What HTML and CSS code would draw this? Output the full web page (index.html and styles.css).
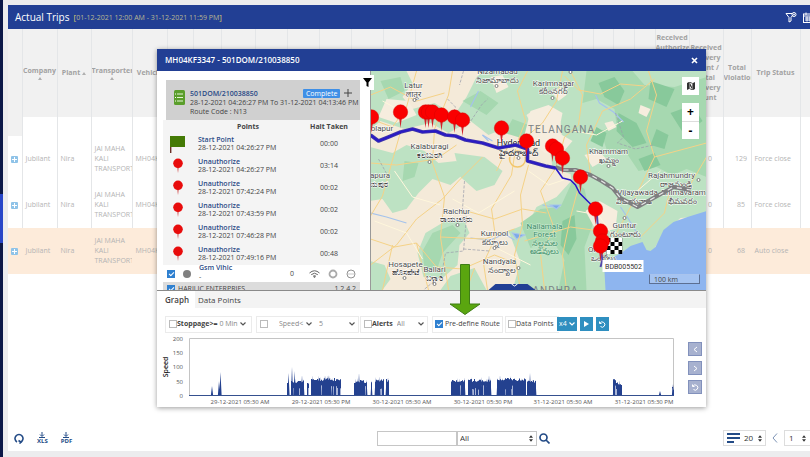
FILE: index.html
```html
<!DOCTYPE html>
<html lang="en">
<head>
<meta charset="utf-8">
<title>Actual Trips</title>
<link rel="stylesheet" href="styles.css">
</head>
<body>
<nav class="rail" aria-label="Main"><span class="rail-active"></span></nav>
<main class="page">
  <header class="page-head">
    <h1>Actual Trips</h1>
    <span class="range">[<b>01-12-2021 12:00 AM - 31-12-2021 11:59 PM</b>]</span>
    <div class="head-tools">
      <button class="bare" aria-label="Filter"><svg width="12" height="12" viewBox="0 0 12 12" fill="none" stroke="#fff"><path d="M1 2.5h6M1 2.5l3 4V11l2-1V6.500l1.500-2"/><circle cx="9" cy="3.500" r="2"/><path d="M9 2.500v2M8 3.500h2" stroke-width=".7"/></svg></button>
      <button class="bare" aria-label="Calendar"><svg width="11" height="11" viewBox="0 0 11 11" fill="none" stroke="#fff"><rect x=".5" y="2" width="10" height="8.500"/><path d="M.5 4h10M3 .5V3M8 .5V3M2 6h7M2 8h7M4 4.500v5M7 4.500v5"/></svg></button>
    </div>
  </header>
  <div class="table-wrap">
    <table class="trips">
      <colgroup><col class="w14"><col class="w35"><col class="w34"><col class="w41"><col class="w35"><col class="w26"><col class="w28"><col class="w34"><col span="9" class="w32"><col class="w29"><col class="w21"><col class="w20"><col class="w21"><col class="w21"><col class="w34"><col class="w34"><col class="w28"><col class="w49"><col class="w40"></colgroup>
      <thead><tr><th></th><th>Company<i class="sort"></i></th><th>Plant<i class="sort in"></i></th><th>Transporter<i class="sort"></i></th><th>Vehicle</th><th></th><th></th><th></th><th></th><th></th><th></th><th></th><th></th><th></th><th></th><th></th><th></th><th></th><th></th><th></th><th></th><th></th><th>Received Authorized Delivery Count<br>/<br>Total Delivery Count</th><th>Received Delivery Count / Total Delivery Count</th><th>Total Violations</th><th>Trip Status</th><th>Down EPOD</th></tr></thead>
      <tbody>
        <tr class="gap"><td></td><td></td><td></td><td></td><td></td><td colspan="18"></td><td></td><td></td><td></td><td></td></tr>
        <tr><td><button class="plus" aria-label="Expand"></button></td><td>Jubilant</td><td>Nira</td><td>JAI MAHA KALI TRANSPORT</td><td>MH04KF</td><td colspan="18"></td><td class="num">0</td><td class="num">129</td><td>Force close</td><td></td></tr>
        <tr><td><button class="plus" aria-label="Expand"></button></td><td>Jubilant</td><td>Nira</td><td>JAI MAHA KALI TRANSPORT</td><td>MH04KF</td><td colspan="18"></td><td class="num">0</td><td class="num">85</td><td>Force close</td><td></td></tr>
        <tr class="hot"><td><button class="plus" aria-label="Expand"></button></td><td>Jubilant</td><td>Nira</td><td>JAI MAHA KALI TRANSPORT</td><td>MH04KF</td><td colspan="18"></td><td class="num">0</td><td class="num">68</td><td>Auto close</td><td></td></tr>
      </tbody>
    </table>
  </div>
  <footer class="page-foot">
    <div class="exports">
      <button class="bare" aria-label="Refresh"><svg width="10" height="11" viewBox="0 0 10 11" fill="none" stroke="#234b86" stroke-width="1.600"><path d="M3 9A4 4 0 1 1 7 9"/><path d="M4.500 7.500L7 9.200L5.500 10.500"/></svg></button>
      <button class="bare export"><svg width="8" height="6" viewBox="0 0 8 6"><path d="M4 0v4M2 2.500l2 2l2-2M1 5.500h6" fill="none" stroke="#234b86"/></svg>XLS</button>
      <button class="bare export"><svg width="8" height="6" viewBox="0 0 8 6"><path d="M4 0v4M2 2.500l2 2l2-2M1 5.500h6" fill="none" stroke="#234b86"/></svg>PDF</button>
    </div>
    <div class="search">
      <input type="text" aria-label="Search text">
      <label class="pick wide"><select aria-label="Search field"><option>All</option></select><svg width="4" height="7" viewBox="0 0 5 8"><path d="M2.500 0L5 3H0zM2.500 8L0 5h5z" fill="#333"/></svg></label>
      <button class="bare" aria-label="Search"><svg width="11" height="11" viewBox="0 0 11 11" fill="none" stroke="#234b86" stroke-width="1.700"><circle cx="4.500" cy="4.500" r="3.500"/><path d="M7 7l3.500 3.500"/></svg></button>
    </div>
    <div class="pager">
      <label class="pick size"><svg width="14" height="10" viewBox="0 0 14 10"><path d="M0 1h13M0 5h13M0 9h7" stroke="#234b86" stroke-width="2"/></svg><select aria-label="Rows per page"><option>20</option></select><svg width="4" height="7" viewBox="0 0 5 8"><path d="M2.500 0L5 3H0zM2.500 8L0 5h5z" fill="#333"/></svg></label>
      <button class="bare" aria-label="Previous page"><svg width="6" height="10" viewBox="0 0 6 10"><path d="M5 .5L1 5l4 4.500" fill="none" stroke="#7d93b5"/></svg></button>
      <label class="pick page-no"><select aria-label="Page"><option>1</option></select><svg width="4" height="7" viewBox="0 0 5 8"><path d="M2.500 0L5 3H0zM2.500 8L0 5h5z" fill="#333"/></svg></label>
    </div>
  </footer>
</main>

<section class="modal" role="dialog" aria-labelledby="dlg">
  <header class="modal-head"><h2 id="dlg">MH04KF3347 - 501DOM/210038850</h2><button class="bare" aria-label="Close"><svg width="7" height="7" viewBox="0 0 7 7"><path d="M1 1l5 5M6 1L1 6" stroke="#fff" stroke-width="1.600"/></svg></button></header>
  <div class="split">
    <aside class="side">
      <div class="trip">
        <svg width="11" height="15" viewBox="0 0 11 15"><rect width="11" height="15" rx="1.500" fill="#5a9e2b"/><path d="M3 4h6M3 7.500h6M3 11h6" stroke="#e4f5d5" stroke-width="1.200"/><path d="M1 4h1M1 7.500h1M1 11h1" stroke="#fff"/></svg>
        <div class="trip-text">
          <div class="trip-top"><strong>501DOM/210038850</strong><span class="badge">Complete</span><button class="bare" aria-label="Add"><svg width="8" height="8" viewBox="0 0 8 8"><path d="M4 0v8M0 4h8" stroke="#444"/></svg></button></div>
          <div class="trip-time">28-12-2021 04:26:27 PM To 31-12-2021 04:13:46 PM</div>
          <div class="trip-route">Route Code : N13</div>
        </div>
      </div>
      <table class="stops">
        <thead><tr><th></th><th>Points</th><th>Halt Taken</th></tr></thead>
        <tbody>
          <tr><td><svg width="15" height="18" viewBox="0 0 15 18"><path d="M.7 1v17" stroke="#6b3028" stroke-width="1.400"/><path d="M0 1h15v11H0z" fill="#447a05"/></svg></td><td><b>Start Point</b>28-12-2021 04:26:27 PM</td><td>00:00</td></tr>
          <tr><td><svg width="10" height="16" viewBox="0 0 10 16"><use href="#mini"/></svg></td><td><b>Unauthorize</b>28-12-2021 04:26:27 PM</td><td>03:14</td></tr>
          <tr><td><svg width="10" height="16" viewBox="0 0 10 16"><use href="#mini"/></svg></td><td><b>Unauthorize</b>28-12-2021 07:42:24 PM</td><td>00:02</td></tr>
          <tr><td><svg width="10" height="16" viewBox="0 0 10 16"><use href="#mini"/></svg></td><td><b>Unauthorize</b>28-12-2021 07:43:59 PM</td><td>00:02</td></tr>
          <tr><td><svg width="10" height="16" viewBox="0 0 10 16"><use href="#mini"/></svg></td><td><b>Unauthorize</b>28-12-2021 07:46:28 PM</td><td>00:02</td></tr>
          <tr><td><svg width="10" height="16" viewBox="0 0 10 16"><use href="#mini"/></svg></td><td><b>Unauthorize</b>28-12-2021 07:49:16 PM</td><td>00:48</td></tr>
        </tbody>
      </table>
      <div class="vehicle">
        <input type="checkbox" checked aria-label="Show vehicle"><i class="dot"></i>
        <div class="veh-name"><b>Gsm Vihic</b><span>-</span></div><span class="veh-n">0</span>
        <svg width="11" height="8" viewBox="0 0 11 8" fill="none" stroke="#666"><path d="M.5 3Q5.500-1.500 10.500 3M2.200 4.700Q5.500 1.700 8.800 4.700M4 6.300Q5.500 5 7 6.300"/><circle cx="5.500" cy="7" r=".5"/></svg>
        <svg width="10" height="10" viewBox="0 0 10 10" fill="none"><circle cx="5" cy="5" r="3.500" stroke="#aaa" stroke-width="1.800"/></svg>
        <svg width="10" height="10" viewBox="0 0 10 10" fill="none" stroke="#777" stroke-width=".8"><circle cx="5" cy="5" r="4"/><path d="M2.500 5h1M4.500 5h1M6.500 5h1"/></svg>
      </div>
      <div class="group"><label><input type="checkbox" checked> HARILIC ENTERPRIES</label><span>1 2 4 2</span></div>
    </aside>
    <div class="map">
      <svg class="map-art" viewBox="0 0 336 219" preserveAspectRatio="xMidYMid slice" role="img" aria-label="Route map">
        <defs>
          <g id="mini"><path d="M4.200 8h1.600L5 15z" fill="#c33"/><circle cx="5" cy="5.300" r="4.800" fill="#e80c0c"/></g>
          <g id="pin"><path d="M-1.300 6h2.600L0 16z" fill="#d3202a"/><circle r="7.200" fill="#fa0000" stroke="#d80000" stroke-width=".5"/></g>
          <pattern id="check" width="8" height="8" patternUnits="userSpaceOnUse" x="236" y="167"><path d="M0 0h8v8H0z" fill="#fff"/><path d="M0 0h4v4H0zM4 4h4v4H4z"/></pattern>
        </defs>
        <path d="M0 0h336v219H0z" fill="#f4ead9"/>
        <g fill="#bde2c3">
          <path d="M0 0h36l6 12-10 14 10 12 22-6 20 12 12-18 10-20 8-6h52l12 16-8 18-14 10 8 16-10 8-22-10-14 6-18-14-22 12-18-10-26 6-24-8-14 12-14-6z"/>
          <path d="M0 76l22 6 14-8 18 6 14 12 18-2 6 14-12 10-18-6-14 14-12 16-14 4-10-14-14 2z"/>
          <path d="M84 82l30 4 18 14-8 14-18 6-16-14z"/>
          <path d="M47 182l8-20 20-12 18-2 6 14-10 12-2 20-16 14-18-2z"/>
          <path d="M138 160l20-8 8-16 20-10 20-22 20 6 14 34 2 42-6 33H142l8-28z"/>
          <path d="M158 0h178v145l-26 2-18 16-10 18-24-4-18 12-22-8-12-40-6-38-18-6-2-14 12-10-2-22-14-12-16 2-14-16z"/>
          <path d="M0 190l14 4 6 14-8 11H0zM80 205l24-8 12 22H70z"/>
        </g>
        <g fill="#a6d8b0">
          <path d="M216 0h46l12 14 30 2 32-10v100l-20-8-14 6-16-8-18 4-12-18-20-4-6-18 16-6-2-16-18-10-14 4z"/>
          <path d="M150 152l20-14 20-2 12-26 12 8 8 36-8 22 2 43h-28l6-30-12-20-22 8z"/>
          <path d="M10 10l20-4 4 14-16 8zM34 90l14 2-4 14-12 4zM92 30l18-10 18 12-12 12zM134 62l8-14 16 6-4 14z"/>
          <path d="M52 180l10-18 20-8 8 8-18 20-6 18-12-2z"/>
        </g>
        <g fill="#88c99b">
          <path d="M228 12l16-6 10 14-6 14-14-8zM248 42l18 10 10 20-14 4-16-16zM280 10l24 8-8 18-18-8zM300 42l22-8 10 16-18 14zM268 88l16-6 6 12-16 6zM226 56l10 6-4 14-12-6zM192 150l12-6 2 24-8 16-8-10zM286 58l12 6-4 14-14-4z"/>
        </g>
        <g fill="#f6edde">
          <path d="M160 40l18-6 14 8-4 20 14 8-12 14-16-2-20-18zM16 28l22 2 8 14-20 8-18-6zM214 84l14-4 8 8-14 8zM234 52l8-2 4 6-8 4zM270 34l10 4-4 8-8-4zM182 22l8-6 6 8-8 6zM120 6l12-2 6 12-12 6zM215 140l14-10 18 10-2 18-18 4z"/>
        </g>
        <path d="M336 140l-19 6-14 5-10 8-8 17-5 4-4-1-4-8-12 4-8 6-14 8-4 12 1 18h101z" fill="#8eb5ef"/>
        <g fill="none" stroke="#a5c3ec" stroke-width="1.200">
          <path d="M225 24l4 8 14 9 10 10M0 142l16 4 20 6M100 167l20 2 14-6 10 6M250 136l8 12 12 20M108 20l-8 16M112 64l10 6M172 134l10 2"/>
          <path d="M142 162l12 2-8 4zM112 64l6 6M180 134h10l-4 4z" fill="#7ca9e8"/>
        </g>
        <g fill="none" stroke="#f5d287" stroke-width="1">
          <path d="M0 48l22 8 14-20 10-36M30 61l-8 28-10 36-12 20M82 0l-4 24-14 34-2 34 12 34-4 40 8 53M112 86l-24 24-16 18-26 20-20 26-26 20M145 78l-4 26-20 34 4 28-12 26 4 27M145 76l10-26-8-30 10-20M146 74l26-22 14-22 6-30M158 94l-8 30 2 30-8 30 6 35M186 96l-16 24 14 38-14 24 4 37M208 116l-8 30-8 38 4 35M186 96l8-30 14-12 4-30-12-24M220 104l-4-30 16-34 28-12 24-20M260 136l24-50-8-26 10-36-8-24M284 86l52-14M260 136l-16 30-10 24M230 160l-30-4-46 14M70 166l44 2 30-10M46 172l20 24 26 2 32-14 20 8M0 168l24 8 22-4 12 47M22 174l-10 45M104 197l-8 22M126 100l12-26M300 116l-6 26-24 24M316 120l20-34M0 92l26 2 40-6 20-14M194 5l14 14 22 4 20-10 24 2M0 24l20-8 26 14 28-8M96 140l28 8 28-10 24 4"/>
        </g>
        <g fill="none" stroke="#fff7dc" stroke-width="1"><path d="M24 100l18 26 28 8M4 150l32 12 16 26M82 128l26 14 36-22M128 178l32 16M158 100l20 14 18-6M206 140l22 4 14 20M12 30l26 14M204 60l22 4 26-14M290 100l-28 24"/></g>
        <circle cx="147" cy="88" r="8" fill="none" stroke="#f2c66b" stroke-width="1.500"/>
        <path d="M77 28l8 8-4 12 18 4 12-18 6-6M93 0l-4 14M94 110l-2 28 4 8-3 34-18 2-4 22-18 15M245 42l8 24-6 6 18 6 18-4M93 178l26 2M8 88l10 18" fill="none" stroke="#9a9caa" stroke-width=".7" stroke-dasharray="3 1.500"/>
        <g class="place">
          <text x="43" y="17">Latur</text><text x="43" y="26">लातूर</text>
          <text x="127" y="3">Nizamabad</text><text x="127" y="12">నిజామాబాదు</text>
          <text x="183" y="15">Karimnagar</text><text x="183" y="23">కరీంనగర్</text>
          <text x="59" y="78">Kalaburagi</text><text x="59" y="87">ಕಲಬುರಗಿ</text>
          <text x="9" y="60">Solapur</text><text x="1" y="107">Vijayapura</text><text x="3" y="116">ವಿಜಯಪುರ</text>
          <text x="86" y="143">Raichur</text><text x="86" y="151">ರಾಯಚೂರು</text>
          <text x="124" y="165">Kurnool</text><text x="124" y="174">కర్నూలు</text>
          <text x="35" y="196">Hosapete</text><text x="35" y="204">ಹೊಸಪೇಟೆ</text>
          <text x="64" y="201">Ballari</text><text x="64" y="210">ಬಳ್ಳಾರಿ</text>
          <text x="129" y="193">Nandyala</text><text x="131" y="202">నంద్యాల</text>
          <text x="238" y="83">Khammam</text><text x="238" y="92">ఖమ్మం</text>
          <text x="301" y="107">Rajahmundry</text><text x="305" y="116">రాజమండ్రి</text>
          <text x="267" y="124">Vijayawada</text><text x="263" y="133">విజయవాడ</text>
          <text x="313" y="124">Bhimavaram</text><text x="312" y="133">భీమవరం</text>
          <text x="254" y="157">Guntur</text><text x="255" y="166">గుంటూరు</text>
          <text x="230" y="181">Ongole</text><text x="233" y="190">ఒంగోలు</text>
          <g class="forest"><text x="174" y="158">Nallamala</text><text x="174" y="166">Forest</text><text x="174" y="175">నల్లమల</text><text x="174" y="183">అడవులు</text></g>
          <g class="city"><text x="148" y="75">Hyderabad</text><text x="148" y="85">హైదరాబాద్</text></g>
        </g>
        <g class="region"><text x="191" y="62">TELANGANA</text><text x="185" y="223">ANDHRA</text></g>
        <g fill="#fff" stroke="#666" stroke-width=".8"><circle cx="44" cy="29" r="1.500"/><circle cx="126" cy="15" r="1.500"/><circle cx="182" cy="27" r="1.500"/><circle cx="59" cy="91" r="1.500"/><circle cx="87" cy="154" r="1.500"/><circle cx="124" cy="177" r="1.500"/><circle cx="148" cy="197" r="1.500"/><circle cx="238" cy="95" r="1.500"/><circle cx="254" cy="147" r="1.500"/><circle cx="328" cy="109" r="1.500"/><circle cx="34" cy="207" r="1.500"/><circle cx="64" cy="213" r="1.500"/><circle cx="148" cy="87" r="1.500"/><circle cx="200" cy="1" r="1.500"/></g>
        <g fill="none" stroke-linejoin="round">
          <path d="M185 96l8 3h12l15 5 11 6 11 7 8 10 17 9 16-9 20-11 17 3" stroke="#7e7e80" stroke-width="4"/>
          <path d="M193 99h12l15 5 11 6 11 7 8 10 17 9 16-9 20-11 17 3" stroke="#e9e9e9" stroke-width="1.200" stroke-dasharray="5 5"/>
          <path d="M0 64l8 6 10-4 12-5 12-3 10 3 13-1 10 4 10 1 10 4 17 3 16 5 17-3 12 4v12l18 5 10 2" stroke="#3c31ad" stroke-width="3.600"/>
          <path d="M0 64l8 6 10-4 12-5 12-3 10 3 13-1 10 4 10 1 10 4 17 3 16 5 17-3 12 4v12l18 5 10 2 7 10 8 2 5 5 4 8 14 14" stroke="#2818c8" stroke-width="1.600"/>
          <path d="M226 138l1 14 4 10M230 178l2 11-2 7" stroke="#5546ac" stroke-width="2"/>
        </g>
        <use href="#pin" x="1" y="46"/><use href="#pin" x="30" y="41"/><use href="#pin" x="55" y="41"/><use href="#pin" x="58" y="41"/><use href="#pin" x="62" y="41"/><use href="#pin" x="71" y="44"/><use href="#pin" x="84" y="46"/><use href="#pin" x="92" y="49"/><use href="#pin" x="131" y="57"/><use href="#pin" x="156" y="70"/><use href="#pin" x="182" y="75"/><use href="#pin" x="186" y="78"/><use href="#pin" x="192" y="87"/><use href="#pin" x="210" y="106"/><use href="#pin" x="225" y="138"/><use href="#pin" x="230" y="160"/>
        <path d="M236 167h16v16h-16z" fill="url(#check)"/>
        <use href="#pin" x="232" y="170"/><use href="#pin" x="230" y="175"/>
        <path d="M232 189h41v12h-41z" fill="#fff"/><text class="tag" x="253" y="198">BDB005502</text>
        <path d="M118 219l7-6h32l8 6z" fill="#223f94"/><path d="M141 213l3 2 3-2" fill="none" stroke="#fff"/>
      </svg>
      <button class="map-btn filter" aria-label="Filter"><svg width="9" height="9" viewBox="0 0 9 9"><path d="M0 0h9L5.500 4.500V9l-2-1V4.500z"/></svg></button>
      <div class="map-tools">
        <button class="map-btn layers" aria-label="Map type"><svg width="8" height="8" viewBox="0 0 8 8"><path d="M0 1l2-1v7L0 8zM6 1l2-1v7L6 8z" fill="#333"/><path d="M2.300 0l3.400 1.500V8L2.300 6.500z" fill="none" stroke="#333" stroke-width=".8"/><path d="M3 1l2 4v2L3 4z" fill="#333"/></svg></button>
        <div class="zoom"><button class="map-btn">+</button><button class="map-btn">-</button></div>
      </div>
      <div class="scale">100 km</div>
    </div>
  </div>
  <div class="tabs"><button class="tab on">Graph</button><button class="tab">Data Points</button></div>
  <div class="filters">
    <div class="box f1"><label><input type="checkbox"><b>Stoppage&gt;=</b></label><label class="pick"><select aria-label="Stoppage minutes"><option>0 Min</option></select><svg width="6" height="4" viewBox="0 0 6 4"><use href="#down"/></svg></label></div>
    <div class="box f2"><input type="checkbox" aria-label="Speed filter"><label class="pick s1"><select aria-label="Speed operator"><option>Speed&lt;</option></select><svg width="6" height="4" viewBox="0 0 6 4"><use href="#down"/></svg></label><label class="pick s2"><select aria-label="Speed value"><option>5</option></select><svg width="6" height="4" viewBox="0 0 6 4"><use href="#down"/></svg></label></div>
    <div class="box f3"><label><input type="checkbox"><b>Alerts</b></label><label class="pick"><select aria-label="Alert type"><option>All</option></select><svg width="6" height="4" viewBox="0 0 6 4"><use href="#down"/></svg></label></div>
    <div class="box f4"><label><input type="checkbox" checked>Pre-define Route</label></div>
    <div class="box f5"><label><input type="checkbox">Data Points</label></div>
    <div class="play">
      <label class="pick speed"><select aria-label="Playback speed"><option>x4</option></select><svg width="6" height="4" viewBox="0 0 6 4"><path d="M.5.5L3 3L5.500.5" fill="none" stroke="#fff" stroke-width="1.200"/></svg></label>
      <button class="teal" aria-label="Play"><svg width="5" height="6" viewBox="0 0 5 6"><path d="M0 0l5 3-5 3z" fill="#fff"/></svg></button>
      <button class="teal" aria-label="Replay"><svg width="7" height="7" viewBox="0 0 7 7"><path id="undo" d="M.5.5v2h2M1 2.200A2.600 2.600 0 1 1 1.500 5.500" fill="none" stroke="#fff"/></svg></button>
    </div>
  </div>
  <div class="chart-row">
    <svg class="chart" viewBox="0 0 522 72" role="img" aria-label="Speed over time">
      <defs><path id="down" d="M.5.5L3 3L5.500.5" fill="none" stroke="#555" stroke-width="1.200"/></defs>
      <text class="axis" transform="translate(11 32) rotate(-90)">Speed</text>
      <g class="tick y"><text x="26" y="6">200</text><text x="26" y="20">150</text><text x="26" y="34">100</text><text x="26" y="49">50</text><text x="26" y="63">0</text></g>
      <path d="M32.500 60V3.500H516.500V60" fill="none" stroke="#c4c4c4"/>
      <path id="soft" fill="#a9b5d6"/>
      <path id="bars" fill="#24418f"/>
      <path d="M32 60.500h485" stroke="#35508f"/>
      <g class="tick x"><text x="83" y="69">29-12-2021 05:30 AM</text><text x="164" y="69">29-12-2021 05:30 PM</text><text x="245" y="69">30-12-2021 05:30 AM</text><text x="326" y="69">30-12-2021 05:30 PM</text><text x="406" y="69">31-12-2021 05:30 AM</text><text x="487" y="69">31-12-2021 05:30 PM</text></g>
    </svg>
    <div class="chart-nav">
      <button aria-label="Back"><svg width="5" height="7" viewBox="0 0 5 7"><path d="M4 1L1 3.500L4 6" fill="none" stroke="#fff"/></svg></button>
      <button aria-label="Forward"><svg width="5" height="7" viewBox="0 0 5 7"><path d="M1 1l3 2.500L1 6" fill="none" stroke="#fff"/></svg></button>
      <button aria-label="Reset"><svg width="7" height="7" viewBox="0 0 7 7"><use href="#undo"/></svg></button>
    </div>
  </div>
  <svg class="pointer" width="32" height="51" viewBox="0 0 32 51" aria-hidden="true"><path d="M11.500.5h9V40H31L16 50.500L1 40h10.500z" fill="#5aa60f" stroke="#3f7d15"/></svg>
</section>
<script src="chart.js"></script>
</body>
</html>
```

FILE: chart.js
```js
// Driving periods: start x, end x, typical height; peaks: x, height.
const runs = [[130,132,12],[134,147,15],[150,152,13],[154,184,17],[197,210,15],[214,215,13],[218,227,16],[229,232,16],
  [294,308,16],[311,334,16],[340,369,17],[370,379,15],[456,459,16],[459,465,13],[515,517,8]];
const peaks = [[55,9],[62,14],[63.5,23],[131.500,22],[135,28],[137.500,24],[145,20],[172,20],[202,22],
  [231,18],[332,20],[343,20],[373,22],[457,17],[503,4],[516,11]];
const base = 60;
let solid = '';
let soft = '';
const bar = (x, h, w) => { solid += `M${x - w} ${base}L${x} ${base - h}L${x + w} ${base}z`; };
let seed = 7;
const rand = () => (seed = (seed * 16807) % 2147483647) / 2147483647;
for (const [a, b, h] of runs) {
  for (let x = a; x < b; x += 1) {
    const top = h - rand() * 3;
    const gap = rand() < 0.25 ? 5 + rand() * 5 : 0;
    solid += `M${x} ${base - gap}v${-(top - gap)}h1v${top - gap}z`;
    if (gap) soft += `M${x} ${base}v${-gap}h1v${gap}z`;
    if (rand() < 0.25) bar(x + 0.5, h + rand() * 3, 0.9);
  }
}
for (const [x, h] of peaks) bar(x, h, 1.1);
document.getElementById('bars').setAttribute('d', solid);
document.getElementById('soft').setAttribute('d', soft);
```

FILE: styles.css
```css
* { box-sizing: border-box; }
body {
  margin: 0;
  min-height: 100vh;
  display: flex;
  background: #ececee;
  color: #444;
  font: 7px/10px "Open Sans", "Noto Sans", sans-serif;
  overflow: hidden;
}
h1, h2 { margin: 0; font-weight: 400; }
button, input, select { font: inherit; color: inherit; margin: 0; padding: 0; }
svg { display: block; flex: none; }
.bare { border: 0; background: none; display: flex; align-items: center; justify-content: center; }

input[type="checkbox"] {
  appearance: none;
  width: 8px;
  height: 8px;
  flex: none;
  border: 1px solid #bbb;
  background: #fff;
}
input[type="checkbox"]:checked { border-color: #2f80d0; background: #2f80d0; position: relative; }
input[type="checkbox"]:checked::after {
  content: "";
  position: absolute;
  left: 2px;
  top: 0;
  width: 2px;
  height: 4px;
  border: solid #fff;
  border-width: 0 1px 1px 0;
  transform: rotate(45deg);
}

.rail { width: 3px; flex: none; background: #0c1848; padding-top: 194px; }
.rail-active { display: block; height: 49px; background: #2746c8; }
.page { flex: 1; min-width: 0; margin: 5px 0 6px 5px; display: flex; flex-direction: column; background: #fff; }

.page-head {
  height: 24px;
  flex: none;
  display: flex;
  align-items: center;
  gap: 4px;
  padding-left: 7px;
  background: #223f94;
  color: #fff;
  overflow: hidden;
}
.page-head h1 { font-size: 10px; white-space: nowrap; }
.range { color: #d8cd6c; font-size: 8px; white-space: nowrap; }
.range b { font-size: 7px; font-weight: 400; color: #b9b793; }
.head-tools { margin-left: auto; margin-right: -4px; display: flex; gap: 6px; }

.table-wrap { overflow: hidden; flex: 1; }
.trips { table-layout: fixed; width: 832px; border-collapse: collapse; color: #b4b4b4; }
.w14 { width: 14px; } .w20 { width: 20px; } .w21 { width: 21px; } .w26 { width: 26px; }
.w28 { width: 28px; } .w29 { width: 29px; } .w32 { width: 32px; } .w34 { width: 34px; }
.w35 { width: 35px; } .w40 { width: 40px; } .w41 { width: 41px; } .w49 { width: 49px; }
.trips th, .trips td { border-right: 1px solid #e4e6e8; padding: 0; overflow: hidden; }
.trips th { height: 88px; background: #f1f1f1; color: #a2a2a2; font-size: 7px; font-weight: 700; }
.trips td { height: 46px; padding-left: 3px; text-align: left; }
.trips .gap td { height: 19px; }
.trips .gap td:first-child { background: #f1f1f1; }
.trips .num { text-align: center; padding-left: 8px; }
.trips .hot td { background: #fdebda; border-color: #fdebda; }
.sort { display: block; width: 4px; margin: 1px auto 0; border: 2px solid transparent; border-top: 0; border-bottom: 3px solid #b0b0b0; }
.sort.in { display: inline-block; margin-left: 2px; }
.plus { display: block; width: 7px; height: 7px; border: 0; border-radius: 1px; background: linear-gradient(#fff, #fff) center / 5px 1px no-repeat, linear-gradient(#fff, #fff) center / 1px 5px no-repeat, #8fc3e8; }

.page-foot { height: 24px; flex: none; margin-bottom: 1px; display: flex; align-items: center; color: #333; font-size: 8px; }
.exports { flex: 0 0 46%; display: flex; align-items: center; gap: 13px; padding-left: 6px; }
.export { flex-direction: column; font-size: 6px; line-height: 6px; font-weight: 700; color: #234b86; }
.search { flex: none; display: flex; align-items: center; }
.search input { width: 80px; height: 15px; border: 1px solid #c6c6c6; }
.pick { display: flex; align-items: center; justify-content: space-between; }
.pick select { appearance: none; border: 0; background: none; flex: 1; min-width: 0; }
.wide { width: 80px; height: 15px; border: 1px solid #c6c6c6; padding: 0 3px 0 2px; margin-right: 2px; }
.pager { flex: 1; display: flex; align-items: center; justify-content: flex-end; gap: 6px; }
.size { width: 43px; height: 16px; border: 1px solid #ddd; padding: 0 3px; gap: 3px; }
.page-no { width: 26px; height: 16px; border: 1px solid #ddd; border-right: 0; padding: 0 4px; }

/* Trip dialog */
.modal { position: absolute; left: 157px; right: 104px; top: 49px; background: #fff; box-shadow: 0 1px 5px rgba(0, 0, 0, .4); }
.modal-head { height: 22px; display: flex; align-items: center; justify-content: space-between; padding: 0 8px; background: #223f94; color: #fff; }
.modal-head h2 { font-size: 8px; font-weight: 600; }
.split { display: flex; height: 220px; border-bottom: 1px solid #8a8a8a; }
.side { width: 213px; flex: none; padding: 9px 10px 0 6px; overflow: hidden; }
.trip { display: flex; gap: 5px; height: 40px; margin: 0 0 0 3px; padding: 8px 2px 0 8px; background: #d0d0d0; }
.trip > svg { margin-top: 2px; }
.trip-text { flex: 1; white-space: nowrap; line-height: 9px; }
.trip-top { display: flex; align-items: center; height: 10px; gap: 4px; padding-right: 6px; }
.trip-top strong { flex: 1; font-weight: 600; color: #2a4a86; }
.badge { background: #3f8fe6; color: #fff; line-height: 9px; padding: 0 3px; border-radius: 1px; }
.stops { width: 100%; border-collapse: collapse; background: #f4f4f4; table-layout: fixed; line-height: 8px; }
.stops th { height: 13px; padding: 0; font-weight: 700; }
.stops th:first-child { width: 35px; }
.stops th:last-child { width: 62px; }
.stops td { height: 22px; padding: 0; }
.stops td:first-child svg { margin: 0 auto 0 7px; }
.stops tr + tr td:first-child svg { margin-left: 10px; }
.stops td:last-child { text-align: center; }
.stops b { display: block; color: #2a4a86; font-weight: 600; }
.vehicle { height: 17px; display: flex; align-items: center; gap: 8px; padding: 0 4px; overflow: hidden; }
.dot { width: 8px; height: 8px; border-radius: 50%; background: #808080; }
.veh-name { flex: 1; line-height: 10px; height: 20px; }
.veh-name b { display: block; color: #2a4a86; font-weight: 600; line-height: 8px; }
.veh-n { margin-right: 7px; }
.group { display: flex; justify-content: space-between; padding: 2px 4px; background: #dcdcdc; }
.group label { display: flex; align-items: center; gap: 3px; }

.map { position: relative; flex: 1; min-width: 0; border-left: 1px solid #999; }
.map-art { width: 100%; height: 100%; }
.map-art text { text-anchor: middle; }
.place { font: 8px Roboto, "Noto Sans", sans-serif; fill: #4b4b4b; stroke: #fff; stroke-width: 1px; paint-order: stroke; }
.forest { fill: #3d8d68; stroke: #cfecd5; }
.city { font-size: 9px; fill: #222; }
.region text { font: 10px Roboto, sans-serif; letter-spacing: 1px; fill: #7b8185; }
.tag { font: 7px Roboto, sans-serif; fill: #333; }
.map-btn { border: 0; background: #fff; display: flex; align-items: center; justify-content: center; width: 17px; height: 18px; font: 700 12px/12px "Open Sans", sans-serif; color: #000; }
.filter { position: absolute; left: -10px; top: 4px; width: 13px; height: 15px; }
.map-tools { position: absolute; right: 7px; top: 6px; display: grid; gap: 8px; }
.zoom .map-btn + .map-btn { border-top: 1px solid #ddd; }
.scale { position: absolute; right: 6px; bottom: 6px; width: 51px; height: 10px; border: 1px solid #5c6f92; border-top-color: #a9c4ee; background: #a5c4f2; padding-left: 4px; line-height: 9px; }

.tabs { display: flex; height: 17px; background: #f3f3f3; }
.tab { border: 0; background: none; padding: 0 3px; font-size: 8px; }
.tab.on { background: #fff; font-weight: 600; padding: 0 6px 0 8px; }
.filters { display: flex; gap: 4px; height: 32px; padding: 7px 8px; align-items: center; white-space: nowrap; color: #444; }
.filters b { font-weight: 700; }
.filters .pick { color: #888; gap: 2px; }
.box { display: flex; align-items: center; gap: 2px; height: 17px; border: 1px solid #ebebeb; padding: 0 3px; flex: none; }
.box > label:first-child { display: flex; align-items: center; }
.f1 { width: 87px; }
.f2 { width: 103px; gap: 11px; }
.f2 .s1 { width: 35px; margin-right: -4px; }
.f2 .s2 { width: 38px; }
.f3 { width: 68px; gap: 4px; margin-left: -3px; }
.f3 .pick { width: 27px; }
.f4 { width: 71px; padding-left: 2px; }
.f4 > label:first-child { gap: 2px; }
.f5 { width: 54px; border-right: 0; margin-left: -2px; padding-left: 2px; }
.play { display: flex; gap: 3px; margin-left: -6px; }
.filters .speed { width: 20px; height: 14px; background: #2f8fc0; color: #fff; padding: 0 2px; gap: 0; }
.teal { width: 13px; height: 14px; border: 0; background: #2f8fc0; display: flex; align-items: center; justify-content: center; }
.chart-row { display: flex; gap: 9px; padding-right: 4px; }
.chart { flex: 1; min-width: 0; margin-top: -5px; }
.chart-nav { display: grid; gap: 5px; align-content: start; padding-top: 2px; }
.chart-nav button { width: 14px; height: 14px; padding: 0; border: 1px solid #8291bc; background: #a7b1cf; display: flex; align-items: center; justify-content: center; }
.tick { font-size: 6px; fill: #555; }
.y { text-anchor: end; }
.x { text-anchor: middle; }
.axis { font-size: 7px; fill: #222; font-weight: 600; text-anchor: middle; }
.pointer { position: absolute; left: 292px; top: 215px; }
```
